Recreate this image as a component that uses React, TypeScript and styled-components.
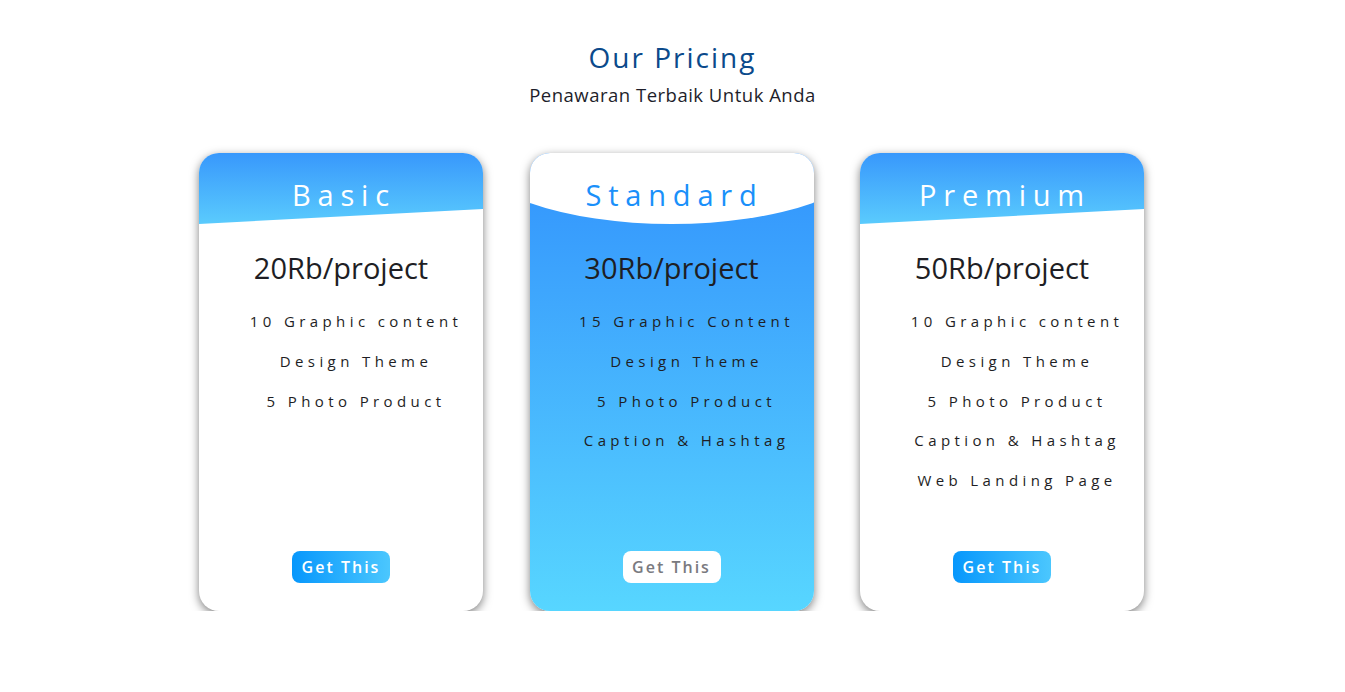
import React from "react";
import styled, { createGlobalStyle } from "styled-components";

const Global = createGlobalStyle`
  * { box-sizing: border-box; }
  body {
    margin: 0;
    background: #ffffff;
    font-family: "Open Sans", "Noto Sans", sans-serif;
  }
`;

const Section = styled.section`
  display: flex;
  flex-direction: column;
  align-items: center;
  padding-top: 37px;
`;

const Heading = styled.h1`
  margin: 0;
  font-size: 28px;
  line-height: 40px;
  font-weight: 500;
  letter-spacing: 2px;
  color: #0b4a8b;
`;

const Sub = styled.p`
  margin: 4px 0 0;
  font-size: 18.5px;
  line-height: 28px;
  letter-spacing: 0.5px;
  color: #1e1e2a;
`;

const Cards = styled.div`
  display: flex;
  gap: 46.5px;
  margin-top: 44px;
  padding-right: 2px;
`;

const Card = styled.div<{ $featured?: boolean }>`
  width: 284px;
  height: 458px;
  border-radius: 20px;
  overflow: hidden;
  display: flex;
  flex-direction: column;
  align-items: center;
  box-shadow: 0 3px 10px rgba(0, 0, 0, 0.5);
  background: ${(p) =>
    p.$featured
      ? "linear-gradient(180deg, #3193fd 0%, #3ea6fd 30%, #4dc1fe 70%, #57d6ff 100%)"
      : "#ffffff"};
`;

const Header = styled.div<{ $featured?: boolean }>`
  width: 100%;
  height: 71px;
  padding-top: 22px;
  text-align: center;
  background: ${(p) =>
    p.$featured ? "#ffffff" : "linear-gradient(180deg, #3898fc 0%, #5acbfd 100%)"};
  clip-path: ${(p) =>
    p.$featured
      ? "ellipse(199px 71px at 50% 0)"
      : "polygon(0 0, 100% 0, 100% 56px, 0 100%)"};
`;

const Title = styled.h2<{ $featured?: boolean }>`
  margin: 0;
  font-size: 29px;
  line-height: 40px;
  font-weight: 500;
  letter-spacing: 6.8px;
  padding-left: 6px;
  color: ${(p) => (p.$featured ? "#1a90fa" : "#ffffff")};
`;

const Price = styled.div`
  margin-top: 24px;
  font-size: 29px;
  line-height: 40px;
  font-weight: 400;
  color: #1e1e24;
`;

const Features = styled.ul`
  list-style: none;
  margin: 22px 0 0;
  padding: 0 0 0 30px;
  display: flex;
  flex-direction: column;
  align-items: center;
  gap: 17.75px;
`;

const Feature = styled.li`
  font-size: 15px;
  line-height: 22px;
  letter-spacing: 4.4px;
  color: #1e1e24;
  white-space: nowrap;
`;

const Button = styled.button<{ $featured?: boolean }>`
  margin-top: auto;
  margin-bottom: 28px;
  width: 98px;
  height: 32px;
  border: none;
  border-radius: 8px;
  font-family: inherit;
  font-size: 16px;
  font-weight: 600;
  letter-spacing: 2px;
  cursor: pointer;
  color: ${(p) => (p.$featured ? "#7a7a80" : "#ffffff")};
  background: ${(p) =>
    p.$featured ? "#ffffff" : "linear-gradient(90deg, #0797fc 0%, #4bc7fe 100%)"};
`;

const plans = [
  {
    name: "Basic",
    price: "20Rb/project",
    features: ["10 Graphic content", "Design Theme", "5 Photo Product"],
  },
  {
    name: "Standard",
    price: "30Rb/project",
    featured: true,
    features: ["15 Graphic Content", "Design Theme", "5 Photo Product", "Caption & Hashtag"],
  },
  {
    name: "Premium",
    price: "50Rb/project",
    features: [
      "10 Graphic content",
      "Design Theme",
      "5 Photo Product",
      "Caption & Hashtag",
      "Web Landing Page",
    ],
  },
];

export default function App() {
  return (
    <>
      <Global />
      <Section>
        <Heading>Our Pricing</Heading>
        <Sub>Penawaran Terbaik Untuk Anda</Sub>
        <Cards>
          {plans.map((p) => (
            <Card key={p.name} $featured={p.featured}>
              <Header $featured={p.featured}>
                <Title $featured={p.featured}>{p.name}</Title>
              </Header>
              <Price>{p.price}</Price>
              <Features>
                {p.features.map((f) => (
                  <Feature key={f}>{f}</Feature>
                ))}
              </Features>
              <Button $featured={p.featured}>Get This</Button>
            </Card>
          ))}
        </Cards>
      </Section>
    </>
  );
}
